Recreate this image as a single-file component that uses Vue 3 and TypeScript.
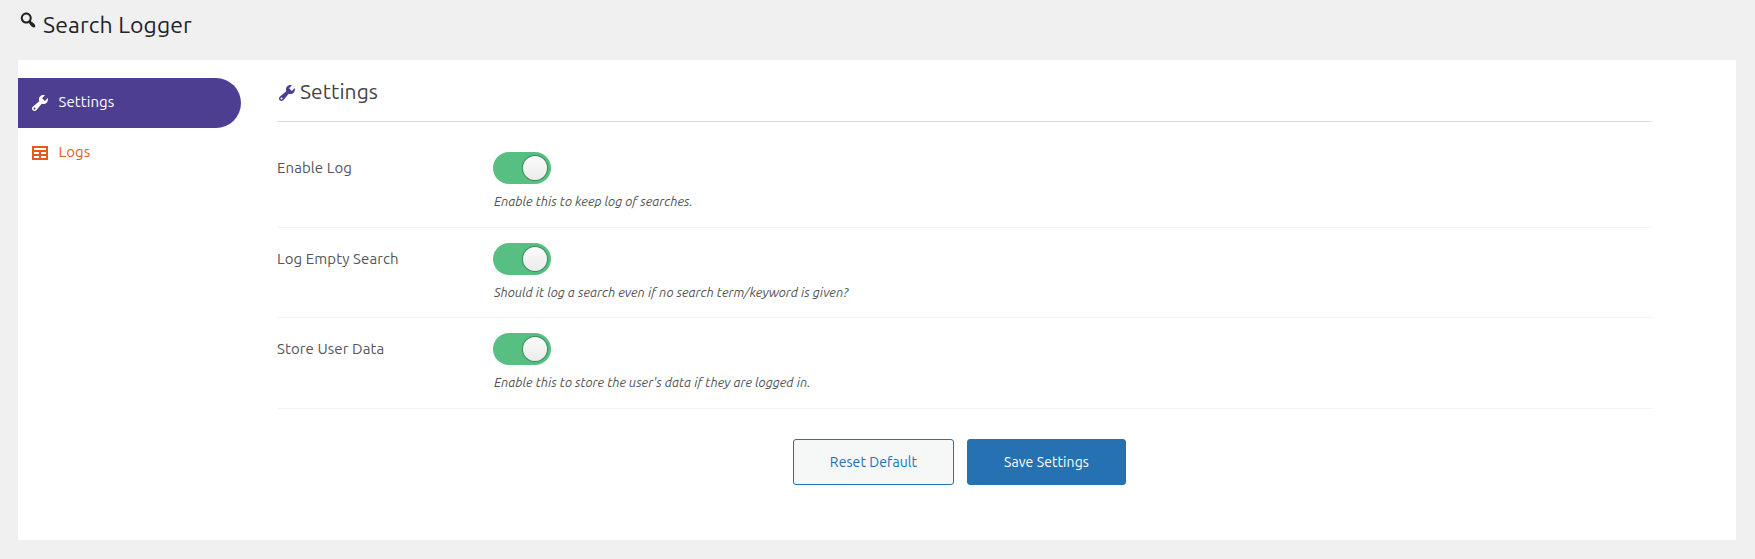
<script setup lang="ts">
import { ref } from 'vue'

type Tab = 'settings' | 'logs'

interface Setting {
  id: string
  label: string
  hint: string
  enabled: boolean
}

const defaults: Setting[] = [
  { id: 'enable-log', label: 'Enable Log', hint: 'Enable this to keep log of searches.', enabled: true },
  {
    id: 'log-empty',
    label: 'Log Empty Search',
    hint: 'Should it log a search even if no search term/keyword is given?',
    enabled: true,
  },
  {
    id: 'store-user',
    label: 'Store User Data',
    hint: "Enable this to store the user's data if they are logged in.",
    enabled: true,
  },
]

const activeTab = ref<Tab>('settings')
const settings = ref<Setting[]>(defaults.map((s) => ({ ...s })))

function reset(): void {
  settings.value = defaults.map((s) => ({ ...s }))
}

const wrench =
  'M16.68 9.77c-1.34 1.34-3.3 1.67-4.95.99l-5.41 6.52c-.99.99-2.59.99-3.58 0s-.99-2.59 0-3.57l6.52-5.42c-.68-1.65-.35-3.61.99-4.95 1.28-1.28 3.12-1.62 4.72-1.06l-2.89 2.89 2.82 2.82 2.86-2.87c.53 1.58.18 3.39-1.08 4.65zM3.81 16.21c.4.39 1.04.39 1.43 0 .4-.4.4-1.04 0-1.43-.39-.4-1.03-.4-1.43 0-.39.39-.39 1.03 0 1.43z'
const table =
  'M18 17V3H2v14h16zM16 7H4V5h12v2zm-7 4H4V9h5v2zm7 0h-5V9h5v2zm-7 4H4v-2h5v2zm7 0h-5v-2h5v2z'
const search =
  'M12.14 4.18c1.87 1.87 2.11 4.75.72 6.89.12.1.22.21.36.31.2.16.47.36.81.59.34.24.56.39.66.47.42.31.73.57.94.78.32.32.6.65.84 1 .25.35.44.69.59 1.04.14.35.21.68.18 1-.02.32-.14.59-.36.81s-.49.34-.81.36c-.31.02-.65-.04-.99-.19-.35-.14-.7-.34-1.04-.59-.35-.24-.68-.52-1-.84-.21-.21-.47-.52-.77-.93-.1-.13-.25-.35-.47-.66-.22-.32-.4-.57-.56-.78-.16-.2-.29-.35-.44-.5-2.07 1.09-4.69.76-6.44-.98-2.14-2.15-2.14-5.64 0-7.78 2.15-2.15 5.63-2.15 7.78 0zm-1.41 6.36c1.36-1.37 1.36-3.58 0-4.95-1.37-1.37-3.59-1.37-4.95 0-1.37 1.37-1.37 3.58 0 4.95 1.36 1.37 3.58 1.37 4.95 0z'
</script>

<template>
  <div class="page">
    <h1 class="page-title">
      <svg class="icon title-icon" viewBox="0 0 20 20"><path :d="search" /></svg>
      <span>Search Logger</span>
    </h1>

    <div class="panel">
      <nav class="tabs">
        <a class="tab" :class="{ active: activeTab === 'settings' }" @click="activeTab = 'settings'">
          <svg class="icon tab-icon" viewBox="0 0 20 20"><path :d="wrench" /></svg>
          <span>Settings</span>
        </a>
        <a class="tab" :class="{ active: activeTab === 'logs' }" @click="activeTab = 'logs'">
          <svg class="icon tab-icon" viewBox="0 0 20 20"><path :d="table" /></svg>
          <span>Logs</span>
        </a>
      </nav>

      <main class="content">
        <h2 class="heading">
          <svg class="icon heading-icon" viewBox="0 0 20 20"><path :d="wrench" /></svg>
          <span>Settings</span>
        </h2>

        <div v-for="s in settings" :key="s.id" class="row">
          <label class="row-label" :for="s.id">{{ s.label }}</label>
          <div class="row-field">
            <button
              :id="s.id"
              type="button"
              class="toggle"
              :class="{ on: s.enabled }"
              role="switch"
              :aria-checked="s.enabled"
              @click="s.enabled = !s.enabled"
            >
              <span class="knob"></span>
            </button>
            <p class="hint">{{ s.hint }}</p>
          </div>
        </div>

        <div class="actions">
          <button type="button" class="btn reset" @click="reset">Reset Default</button>
          <button type="button" class="btn save">Save Settings</button>
        </div>
      </main>
    </div>
  </div>
</template>

<style>
body {
  background: #f0f0f0;
}
</style>

<style scoped>
.page {
  box-sizing: border-box;
  height: 559px;
  padding: 0 19px 19px 18px;
  display: flex;
  flex-direction: column;
  font-family: Ubuntu, "Noto Sans", "Open Sans", sans-serif;
  background: #f0f0f0;
}

.icon {
  width: 20px;
  height: 20px;
  flex: none;
  fill: currentColor;
}

.page-title {
  margin: 0;
  height: 60px;
  display: flex;
  align-items: flex-start;
  gap: 5px;
  font-size: 23px;
  font-weight: 400;
  line-height: 49px;
  letter-spacing: 0.12px;
  color: #1d2327;
}

.title-icon {
  margin-top: 10px;
}

.panel {
  flex: 1;
  display: flex;
  background: #fff;
}

.tabs {
  width: 223px;
  padding-top: 18px;
  flex: none;
}

.tab {
  box-sizing: border-box;
  height: 50px;
  padding-left: 12px;
  display: flex;
  gap: 8.5px;
  font-size: 15px;
  line-height: 47px;
  letter-spacing: 0.08px;
  color: #e35b1e;
  cursor: pointer;
}

.tab.active {
  color: #fff;
  background: #4d3e92;
  border-radius: 0 25px 25px 0;
}

.tab-icon {
  margin-top: 15px;
}

.content {
  flex: 1;
  margin: 0 84px 0 36px;
  padding-top: 17px;
}

.heading {
  margin: 0;
  padding-bottom: 16px;
  display: flex;
  gap: 3px;
  border-bottom: 1px solid #dcdcde;
  font-size: 21px;
  font-weight: 400;
  line-height: 28px;
  letter-spacing: 0.08px;
  color: #444;
}

.heading-icon {
  margin-top: 6px;
  color: #4d3e92;
}

.row {
  display: flex;
  padding: 15px 0 16px;
  border-bottom: 1px solid #f2f2f3;
}

.heading + .row {
  padding-top: 30px;
}

.row:nth-of-type(2) {
  padding-bottom: 15px;
}

.row-label {
  width: 216px;
  flex: none;
  font-size: 15px;
  line-height: 31px;
  letter-spacing: 0.09px;
  color: #555659;
}

.toggle {
  display: block;
  box-sizing: border-box;
  width: 58px;
  height: 32px;
  padding: 4px;
  border: 0;
  border-radius: 16px;
  background: #ccc;
  cursor: pointer;
}

.toggle.on {
  background: #56bf81;
}

.knob {
  display: block;
  width: 24px;
  height: 24px;
  border-radius: 50%;
  background: linear-gradient(#fbfbfb, #ebebeb);
  box-shadow: 0 0 1px 1px rgba(0, 0, 0, 0.3);
}

.toggle.on .knob {
  margin-left: auto;
}

.hint {
  margin: 7px 0 0 1px;
  font-size: 13px;
  font-style: italic;
  line-height: 20px;
  letter-spacing: 0.015px;
  color: #515255;
}

.actions {
  display: flex;
  justify-content: center;
  gap: 13px;
  margin-top: 30px;
  padding-right: 10px;
}

.btn {
  box-sizing: border-box;
  height: 46px;
  padding: 0;
  border: 1px solid #2571b1;
  border-radius: 3px;
  font: 14px/44px Ubuntu, "Noto Sans", "Open Sans", sans-serif;
  letter-spacing: 0.08px;
  cursor: pointer;
}

.reset {
  width: 161px;
  color: #2571b1;
  background: #f6f7f7;
}

.save {
  width: 159px;
  color: #fff;
  background: #2571b1;
}
</style>
